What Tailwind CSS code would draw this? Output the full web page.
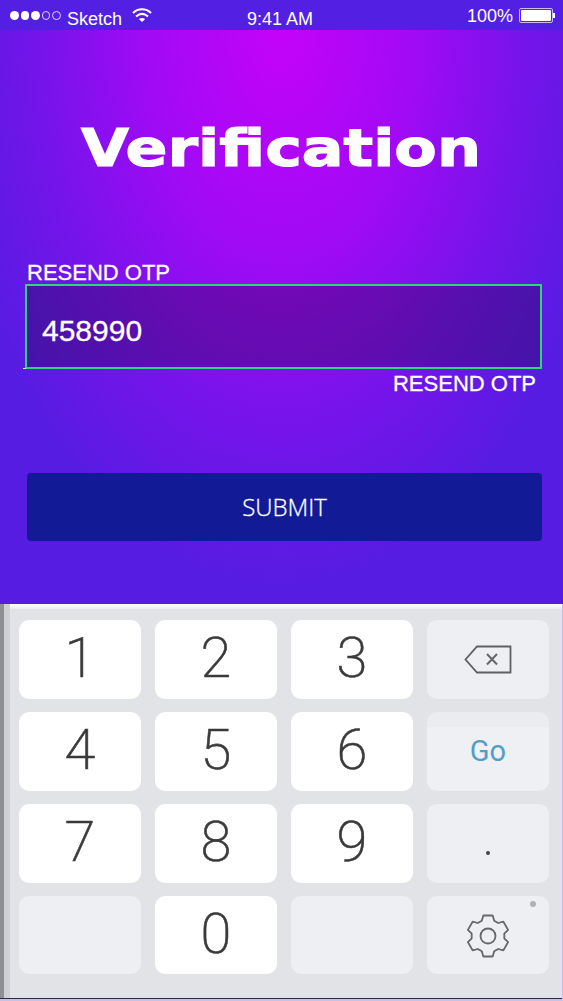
<!DOCTYPE html>
<html lang="en">
<head>
<meta charset="UTF-8" />
<meta name="viewport" content="width=device-width, initial-scale=1.0" />
<title>Verification</title>
<script src="https://cdn.jsdelivr.net/npm/@tailwindcss/browser@4"></script>
</head>
<body class="w-[563px] h-[1001px] overflow-hidden bg-[#c9c0ee] font-['Liberation_Sans',sans-serif] text-white">
  <!-- status bar -->
  <div class="h-[30px] bg-[#5320e3] flex items-start relative">
    <div class="flex gap-[2px] ml-[10px] mt-[11px] w-[51px]">
      <span class="w-[8.5px] h-[8.5px] shrink-0 rounded-full bg-white"></span>
      <span class="w-[8.5px] h-[8.5px] shrink-0 rounded-full bg-white"></span>
      <span class="w-[8.5px] h-[8.5px] shrink-0 rounded-full bg-white"></span>
      <span class="w-[8.5px] h-[8.5px] shrink-0 rounded-full border border-white/80"></span>
      <span class="w-[8.5px] h-[8.5px] shrink-0 rounded-full border border-white/80"></span>
    </div>
    <span class="ml-[6px] mt-[9px] text-[18px] leading-[20px] w-[59px] shrink-0">Sketch</span>
    <svg class="mt-[8px] ml-[6px] shrink-0" width="20" height="15" viewBox="0 0 20 15" fill="none" stroke="white" stroke-width="2">
      <path d="M1 5 C6 0 14 0 19 5" />
      <path d="M4 8.5 C8 5 12 5 16 8.5" />
      <path d="M10 14 L6.8 11 C8.8 9.6 11.2 9.6 13.2 11 Z" fill="white" stroke="none" />
    </svg>
    <span class="ml-[95px] mt-[9px] text-[18px] leading-[20px] shrink-0">9:41 AM</span>
    <span class="ml-auto mt-[6px] text-[18px] leading-[20px] shrink-0">100%</span>
    <div class="flex items-center mt-[8px] ml-[6px] mr-[8px] shrink-0">
      <div class="w-[34px] h-[15px] rounded-[2px] border border-[#c5bdf3] p-[1px]"><div class="h-full bg-white rounded-[1px]"></div></div>
      <div class="w-[2px] h-[5px] bg-white"></div>
    </div>
  </div>

  <!-- main -->
  <main class="h-[574px] pt-[85px] bg-[radial-gradient(ellipse_340px_560px_at_50%_0%,#c402f9_0%,#a00af5_40%,#7414ea_72%,#561ce2_100%)]">
    <h1 class="w-fit mx-auto font-['DejaVu_Sans',sans-serif] font-bold text-[52px] leading-[66px] scale-x-[1.19] [-webkit-text-stroke:1.2px_white]">Verification</h1>
    <div class="ml-[27px] mt-[80px] text-[22px] leading-[23px] [-webkit-text-stroke:0.3px_white]">RESEND OTP</div>
    <div class="relative ml-[25px] w-[517px] h-[85px] border-2 border-[#2fd678] bg-black/25 flex items-center pl-[15px] pt-[7px] text-[30px] [-webkit-text-stroke:0.3px_white]">
      458990
      <span class="absolute left-[-4px] bottom-[-2px] w-[3px] h-[1px] bg-white/80"></span>
    </div>
    <div class="mr-[27px] mt-[3px] text-right text-[22px] leading-[24px] [-webkit-text-stroke:0.3px_white]">RESEND OTP</div>
    <button class="block ml-[27px] mt-[77px] w-[515px] h-[68px] rounded-[4px] bg-[#121a96] font-['Open_Sans',sans-serif] font-light text-[24px] [-webkit-text-stroke:0.3px_white]">SUBMIT</button>
  </main>

  <!-- keyboard -->
  <section class="h-[395px] w-[562px] flex border-b border-[#2c2a3a] font-['Roboto',sans-serif] text-[#3a3a3c]">
    <div class="w-[4px] bg-[#8f8e94]"></div>
    <div class="w-[6px] bg-[#cfd0d3]"></div>
    <div class="flex-1 flex flex-col">
      <div class="h-[5px] bg-gradient-to-b from-white to-[#eceded]"></div>
      <div class="flex-1 bg-[#e2e3e6] pl-[9px] pt-[11px]">
        <div class="grid grid-cols-[122px_122px_122px_122px] grid-rows-[79px_79px_79px_78px] gap-x-[14px] gap-y-[13px] text-[56px] font-extralight [-webkit-text-stroke:0.6px_#3a3a3c]">
          <div class="flex items-center justify-center rounded-[10px] bg-white pb-[3px]">1</div>
          <div class="flex items-center justify-center rounded-[10px] bg-white pb-[3px]">2</div>
          <div class="flex items-center justify-center rounded-[10px] bg-white pb-[3px]">3</div>
          <div class="flex items-center justify-center rounded-[10px] bg-[#eeeff2]">
            <svg width="48" height="29" viewBox="0 0 48 29" fill="none" stroke="#5f6064" stroke-width="1.8">
              <path d="M13 1.5 H46.5 V27.5 H13 L1.5 14.5 Z" />
              <path d="M23 9 L33 19.5 M33 9 L23 19.5" stroke="#66676b" stroke-width="2" />
            </svg>
          </div>
          <div class="flex items-center justify-center rounded-[10px] bg-white pb-[3px]">4</div>
          <div class="flex items-center justify-center rounded-[10px] bg-white pb-[3px]">5</div>
          <div class="flex items-center justify-center rounded-[10px] bg-white pb-[3px]">6</div>
          <div class="flex items-center justify-center rounded-[10px] bg-[linear-gradient(#ebecef_0,#ebecef_15px,#eff0f3_15px)] text-[#4f9fc7] text-[29px] font-normal [-webkit-text-stroke:0]">Go</div>
          <div class="flex items-center justify-center rounded-[10px] bg-white pb-[3px]">7</div>
          <div class="flex items-center justify-center rounded-[10px] bg-white pb-[3px]">8</div>
          <div class="flex items-center justify-center rounded-[10px] bg-white pb-[3px]">9</div>
          <div class="flex items-center justify-center rounded-[10px] bg-[#eeeff2] pt-[19px]"><span class="w-[4px] h-[4px] rounded-full bg-[#444]"></span></div>
          <div class="rounded-[10px] bg-[#eeeff2]"></div>
          <div class="flex items-center justify-center rounded-[10px] bg-white pb-[3px]">0</div>
          <div class="rounded-[10px] bg-[#eeeff2]"></div>
          <div class="relative flex items-center justify-center rounded-[10px] bg-[#eeeff2]">
            <span class="absolute top-[5px] right-[13px] w-[6px] h-[6px] rounded-full bg-[#aeb0b5]"></span>
            <svg class="mt-[2px]" width="44" height="44" viewBox="0 0 44 44" fill="none" stroke="#66676b" stroke-width="1.8" stroke-linejoin="round">
              <path d="M17.3 1.5 H26.7 L28.2 6.7 L32.2 9 L37.4 7.7 L42.1 15.9 L38.3 19.7 V24.3 L42.1 28.1 L37.4 36.3 L32.2 35 L28.2 37.3 L26.7 42.5 H17.3 L15.8 37.3 L11.8 35 L6.6 36.3 L1.9 28.1 L5.7 24.3 V19.7 L1.9 15.9 L6.6 7.7 L11.8 9 L15.8 6.7 Z" />
              <circle cx="22" cy="22" r="7.5" />
            </svg>
          </div>
        </div>
      </div>
    </div>
  </section>
</body>
</html>
